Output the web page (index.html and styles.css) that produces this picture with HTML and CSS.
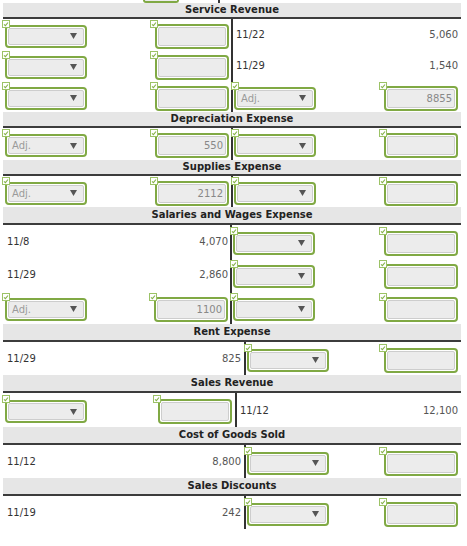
FILE: index.html
```html
<!DOCTYPE html>
<html>
<head>
<meta charset="utf-8">
<link rel="stylesheet" href="styles.css">
</head>
<body>
<div class="prev"><div class="prev-box"></div><div class="prev-line"></div></div>
<div class="ledger">

  <section class="acct a-228 h-sm r-31">
    <div class="hdr">Service Revenue</div>
    <div class="row">
      <div class="half-l"><div class="sel"><svg class="ok" viewBox="0 0 8 8"><rect x="0.5" y="0.5" width="7" height="7"/><path d="M2 4.3 3.4 5.6 6 2.5"/></svg><div class="in"><span></span><svg class="caret" viewBox="0 0 7 6"><polygon points="0,0 7,0 3.5,6"/></svg></div></div><div class="inp"><svg class="ok" viewBox="0 0 8 8"><rect x="0.5" y="0.5" width="7" height="7"/><path d="M2 4.3 3.4 5.6 6 2.5"/></svg><div class="in"></div></div></div>
      <div class="vline"></div>
      <div class="half-r"><span class="date">11/22</span><span class="amt">5,060</span></div>
    </div>
    <div class="row">
      <div class="half-l"><div class="sel"><svg class="ok" viewBox="0 0 8 8"><rect x="0.5" y="0.5" width="7" height="7"/><path d="M2 4.3 3.4 5.6 6 2.5"/></svg><div class="in"><span></span><svg class="caret" viewBox="0 0 7 6"><polygon points="0,0 7,0 3.5,6"/></svg></div></div><div class="inp"><svg class="ok" viewBox="0 0 8 8"><rect x="0.5" y="0.5" width="7" height="7"/><path d="M2 4.3 3.4 5.6 6 2.5"/></svg><div class="in"></div></div></div>
      <div class="vline"></div>
      <div class="half-r"><span class="date">11/29</span><span class="amt">1,540</span></div>
    </div>
    <div class="row">
      <div class="half-l"><div class="sel"><svg class="ok" viewBox="0 0 8 8"><rect x="0.5" y="0.5" width="7" height="7"/><path d="M2 4.3 3.4 5.6 6 2.5"/></svg><div class="in"><span></span><svg class="caret" viewBox="0 0 7 6"><polygon points="0,0 7,0 3.5,6"/></svg></div></div><div class="inp"><svg class="ok" viewBox="0 0 8 8"><rect x="0.5" y="0.5" width="7" height="7"/><path d="M2 4.3 3.4 5.6 6 2.5"/></svg><div class="in"></div></div></div>
      <div class="vline"></div>
      <div class="half-r"><div class="sel"><svg class="ok" viewBox="0 0 8 8"><rect x="0.5" y="0.5" width="7" height="7"/><path d="M2 4.3 3.4 5.6 6 2.5"/></svg><div class="in"><span class="ph">Adj.</span><svg class="caret" viewBox="0 0 7 6"><polygon points="0,0 7,0 3.5,6"/></svg></div></div><div class="inp"><svg class="ok" viewBox="0 0 8 8"><rect x="0.5" y="0.5" width="7" height="7"/><path d="M2 4.3 3.4 5.6 6 2.5"/></svg><div class="in">8855</div></div></div>
    </div>
  </section>

  <section class="acct a-228 h-sm r-32">
    <div class="hdr">Depreciation Expense</div>
    <div class="row">
      <div class="half-l"><div class="sel"><svg class="ok" viewBox="0 0 8 8"><rect x="0.5" y="0.5" width="7" height="7"/><path d="M2 4.3 3.4 5.6 6 2.5"/></svg><div class="in"><span class="ph">Adj.</span><svg class="caret" viewBox="0 0 7 6"><polygon points="0,0 7,0 3.5,6"/></svg></div></div><div class="inp"><svg class="ok" viewBox="0 0 8 8"><rect x="0.5" y="0.5" width="7" height="7"/><path d="M2 4.3 3.4 5.6 6 2.5"/></svg><div class="in">550</div></div></div>
      <div class="vline"></div>
      <div class="half-r"><div class="sel"><svg class="ok" viewBox="0 0 8 8"><rect x="0.5" y="0.5" width="7" height="7"/><path d="M2 4.3 3.4 5.6 6 2.5"/></svg><div class="in"><span></span><svg class="caret" viewBox="0 0 7 6"><polygon points="0,0 7,0 3.5,6"/></svg></div></div><div class="inp"><svg class="ok" viewBox="0 0 8 8"><rect x="0.5" y="0.5" width="7" height="7"/><path d="M2 4.3 3.4 5.6 6 2.5"/></svg><div class="in"></div></div></div>
    </div>
  </section>

  <section class="acct a-228 h-sm r-31">
    <div class="hdr">Supplies Expense</div>
    <div class="row">
      <div class="half-l"><div class="sel"><svg class="ok" viewBox="0 0 8 8"><rect x="0.5" y="0.5" width="7" height="7"/><path d="M2 4.3 3.4 5.6 6 2.5"/></svg><div class="in"><span class="ph">Adj.</span><svg class="caret" viewBox="0 0 7 6"><polygon points="0,0 7,0 3.5,6"/></svg></div></div><div class="inp"><svg class="ok" viewBox="0 0 8 8"><rect x="0.5" y="0.5" width="7" height="7"/><path d="M2 4.3 3.4 5.6 6 2.5"/></svg><div class="in">2112</div></div></div>
      <div class="vline"></div>
      <div class="half-r"><div class="sel"><svg class="ok" viewBox="0 0 8 8"><rect x="0.5" y="0.5" width="7" height="7"/><path d="M2 4.3 3.4 5.6 6 2.5"/></svg><div class="in"><span></span><svg class="caret" viewBox="0 0 7 6"><polygon points="0,0 7,0 3.5,6"/></svg></div></div><div class="inp"><svg class="ok" viewBox="0 0 8 8"><rect x="0.5" y="0.5" width="7" height="7"/><path d="M2 4.3 3.4 5.6 6 2.5"/></svg><div class="in"></div></div></div>
    </div>
  </section>

  <section class="acct a-227 r-33">
    <div class="hdr">Salaries and Wages Expense</div>
    <div class="row">
      <div class="half-l"><span class="date">11/8</span><span class="amt">4,070</span></div>
      <div class="vline"></div>
      <div class="half-r"><div class="sel"><svg class="ok" viewBox="0 0 8 8"><rect x="0.5" y="0.5" width="7" height="7"/><path d="M2 4.3 3.4 5.6 6 2.5"/></svg><div class="in"><span></span><svg class="caret" viewBox="0 0 7 6"><polygon points="0,0 7,0 3.5,6"/></svg></div></div><div class="inp"><svg class="ok" viewBox="0 0 8 8"><rect x="0.5" y="0.5" width="7" height="7"/><path d="M2 4.3 3.4 5.6 6 2.5"/></svg><div class="in"></div></div></div>
    </div>
    <div class="row">
      <div class="half-l"><span class="date">11/29</span><span class="amt">2,860</span></div>
      <div class="vline"></div>
      <div class="half-r"><div class="sel"><svg class="ok" viewBox="0 0 8 8"><rect x="0.5" y="0.5" width="7" height="7"/><path d="M2 4.3 3.4 5.6 6 2.5"/></svg><div class="in"><span></span><svg class="caret" viewBox="0 0 7 6"><polygon points="0,0 7,0 3.5,6"/></svg></div></div><div class="inp"><svg class="ok" viewBox="0 0 8 8"><rect x="0.5" y="0.5" width="7" height="7"/><path d="M2 4.3 3.4 5.6 6 2.5"/></svg><div class="in"></div></div></div>
    </div>
    <div class="row">
      <div class="half-l"><div class="sel"><svg class="ok" viewBox="0 0 8 8"><rect x="0.5" y="0.5" width="7" height="7"/><path d="M2 4.3 3.4 5.6 6 2.5"/></svg><div class="in"><span class="ph">Adj.</span><svg class="caret" viewBox="0 0 7 6"><polygon points="0,0 7,0 3.5,6"/></svg></div></div><div class="inp"><svg class="ok" viewBox="0 0 8 8"><rect x="0.5" y="0.5" width="7" height="7"/><path d="M2 4.3 3.4 5.6 6 2.5"/></svg><div class="in">1100</div></div></div>
      <div class="vline"></div>
      <div class="half-r"><div class="sel"><svg class="ok" viewBox="0 0 8 8"><rect x="0.5" y="0.5" width="7" height="7"/><path d="M2 4.3 3.4 5.6 6 2.5"/></svg><div class="in"><span></span><svg class="caret" viewBox="0 0 7 6"><polygon points="0,0 7,0 3.5,6"/></svg></div></div><div class="inp"><svg class="ok" viewBox="0 0 8 8"><rect x="0.5" y="0.5" width="7" height="7"/><path d="M2 4.3 3.4 5.6 6 2.5"/></svg><div class="in"></div></div></div>
    </div>
  </section>

  <section class="acct a-241 r-33">
    <div class="hdr">Rent Expense</div>
    <div class="row">
      <div class="half-l"><span class="date">11/29</span><span class="amt">825</span></div>
      <div class="vline"></div>
      <div class="half-r"><div class="sel"><svg class="ok" viewBox="0 0 8 8"><rect x="0.5" y="0.5" width="7" height="7"/><path d="M2 4.3 3.4 5.6 6 2.5"/></svg><div class="in"><span></span><svg class="caret" viewBox="0 0 7 6"><polygon points="0,0 7,0 3.5,6"/></svg></div></div><div class="inp"><svg class="ok" viewBox="0 0 8 8"><rect x="0.5" y="0.5" width="7" height="7"/><path d="M2 4.3 3.4 5.6 6 2.5"/></svg><div class="in"></div></div></div>
    </div>
  </section>

  <section class="acct a-232 r-34">
    <div class="hdr">Sales Revenue</div>
    <div class="row">
      <div class="half-l"><div class="sel"><svg class="ok" viewBox="0 0 8 8"><rect x="0.5" y="0.5" width="7" height="7"/><path d="M2 4.3 3.4 5.6 6 2.5"/></svg><div class="in"><span></span><svg class="caret" viewBox="0 0 7 6"><polygon points="0,0 7,0 3.5,6"/></svg></div></div><div class="inp"><svg class="ok" viewBox="0 0 8 8"><rect x="0.5" y="0.5" width="7" height="7"/><path d="M2 4.3 3.4 5.6 6 2.5"/></svg><div class="in"></div></div></div>
      <div class="vline"></div>
      <div class="half-r"><span class="date">11/12</span><span class="amt">12,100</span></div>
    </div>
  </section>

  <section class="acct a-241 r-33">
    <div class="hdr">Cost of Goods Sold</div>
    <div class="row">
      <div class="half-l"><span class="date">11/12</span><span class="amt">8,800</span></div>
      <div class="vline"></div>
      <div class="half-r"><div class="sel"><svg class="ok" viewBox="0 0 8 8"><rect x="0.5" y="0.5" width="7" height="7"/><path d="M2 4.3 3.4 5.6 6 2.5"/></svg><div class="in"><span></span><svg class="caret" viewBox="0 0 7 6"><polygon points="0,0 7,0 3.5,6"/></svg></div></div><div class="inp"><svg class="ok" viewBox="0 0 8 8"><rect x="0.5" y="0.5" width="7" height="7"/><path d="M2 4.3 3.4 5.6 6 2.5"/></svg><div class="in"></div></div></div>
    </div>
  </section>

  <section class="acct a-241 r-33">
    <div class="hdr">Sales Discounts</div>
    <div class="row">
      <div class="half-l"><span class="date">11/19</span><span class="amt">242</span></div>
      <div class="vline"></div>
      <div class="half-r"><div class="sel"><svg class="ok" viewBox="0 0 8 8"><rect x="0.5" y="0.5" width="7" height="7"/><path d="M2 4.3 3.4 5.6 6 2.5"/></svg><div class="in"><span></span><svg class="caret" viewBox="0 0 7 6"><polygon points="0,0 7,0 3.5,6"/></svg></div></div><div class="inp"><svg class="ok" viewBox="0 0 8 8"><rect x="0.5" y="0.5" width="7" height="7"/><path d="M2 4.3 3.4 5.6 6 2.5"/></svg><div class="in"></div></div></div>
    </div>
  </section>

</div>
</body>
</html>
```

FILE: styles.css
```css
html, body {
  margin: 0;
  padding: 0;
  background: #fff;
}
body {
  font-family: "DejaVu Sans", Verdana, sans-serif;
  font-size: 10px;
  color: #333;
  width: 467px;
  height: 546px;
  overflow: hidden;
}

.prev {
  display: flex;
  height: 3px;
}
.prev-box {
  margin-left: 143px;
  width: 36px;
  height: 3px;
  box-sizing: border-box;
  border: 2px solid #80a944;
  border-top: none;
  border-radius: 0 0 4px 4px;
  background: #ececec;
}
.prev-line {
  margin-left: 39px;
  width: 2px;
  background: #3a3a3a;
}

.ledger {
  margin-left: 3px;
  width: 458px;
}

.acct { --lw: 228px; --rh: 31px; --hh: 16px; --pr: 2px; }
.a-227 { --lw: 227px; }
.a-228 { --lw: 228px; }
.a-232 { --lw: 232px; --pr: 3px; }
.a-241 { --lw: 241px; --pr: 3px; }
.h-sm { --hh: 14px; }
.r-31 { --rh: 31px; }
.r-32 { --rh: 32px; }
.r-33 { --rh: 33px; }
.r-34 { --rh: 34px; }

.hdr {
  height: var(--hh);
  line-height: var(--hh);
  background: #e6e6e6;
  border-bottom: 2px solid #3c3c3c;
  text-align: center;
  font-weight: bold;
  color: #222;
}

.row {
  display: flex;
  height: var(--rh);
}
.half-l {
  width: var(--lw);
  box-sizing: border-box;
  display: flex;
  align-items: center;
  justify-content: space-between;
  padding: 0 var(--pr) 0 2px;
}
.vline {
  width: 2px;
  background: #333;
}
.half-r {
  flex: 1;
  display: flex;
  align-items: center;
  justify-content: space-between;
  padding: 0 3px 0 1px;
}

.date {
  padding-left: 2px;
  color: #333;
}
.amt {
  color: #555;
}

.sel, .inp {
  position: relative;
  box-sizing: border-box;
  border: 2px solid #80a944;
  border-radius: 4px;
  padding: 1px;
  background: #fff;
  margin-top: 3px;
}
.sel {
  width: 82px;
  height: 23px;
}
.inp {
  width: 74px;
  height: 25px;
}
.in {
  box-sizing: border-box;
  height: 100%;
  border: 1px solid #cdcdcd;
  border-radius: 2px;
  background: #ececec;
  display: flex;
  align-items: center;
}
.sel .in {
  justify-content: space-between;
  padding: 0 6px 0 3px;
}
.inp .in {
  justify-content: flex-end;
  padding-right: 2px;
  color: #888;
}
.ph {
  color: #9a9a9a;
}
.caret {
  width: 7px;
  height: 6px;
  fill: #555;
}

.ok {
  position: absolute;
  width: 8px;
  height: 8px;
}
.sel .ok { left: -5px; top: -7px; }
.inp .ok { left: -7px; top: -6px; }
.ok rect {
  fill: #fff;
  stroke: #9cc266;
  stroke-width: 1;
}
.ok path {
  fill: none;
  stroke: #86b24a;
  stroke-width: 1.1;
}
```
